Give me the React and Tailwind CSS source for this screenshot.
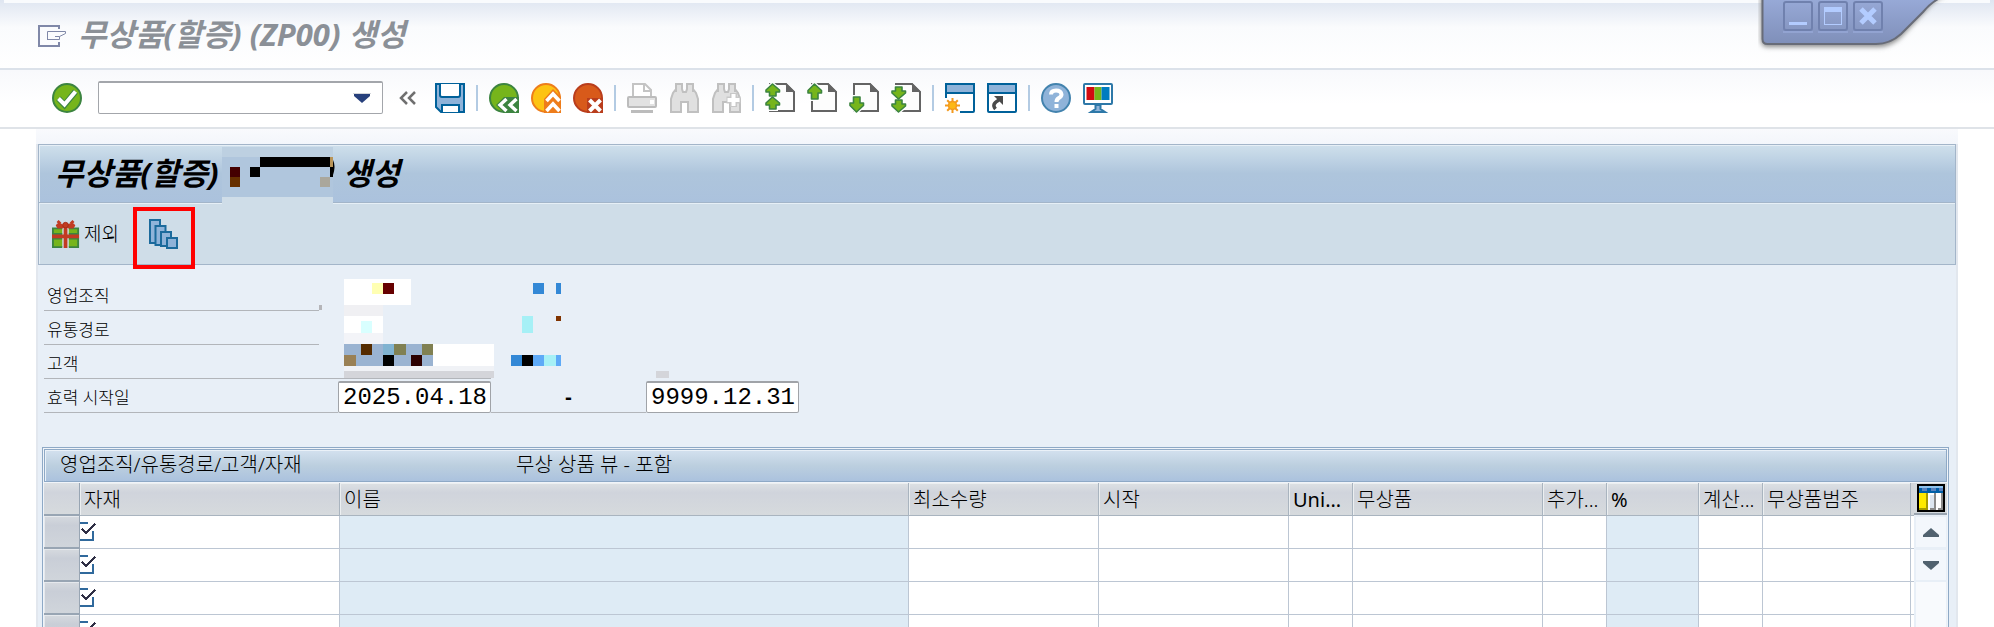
import React from 'react';

const columns = [
  { label: '자재', width: 'w-[260px]' },
  { label: '이름', width: '', readOnly: true },
  { label: '최소수량', width: 'w-[190px]' },
  { label: '시작', width: 'w-[190px]' },
  { label: 'Uni...', width: 'w-[64px]', latin: true },
  { label: '무상품', width: 'w-[190px]' },
  { label: '추가...', width: 'w-[64px]' },
  { label: '%', width: 'w-[92px]', readOnly: true, latin: true },
  { label: '계산...', width: 'w-[64px]' },
  { label: '무상품범주', width: 'w-[148px]' },
];

const rows = [1, 2, 3, 4];

function Icon({ children, size = 30 }) {
  return (
    <svg width={size} height={size} viewBox="0 0 30 30" fill="none" className="block shrink-0">
      {children}
    </svg>
  );
}

function ToolButton({ label, children, disabled }) {
  return (
    <button type="button" aria-label={label} disabled={disabled} className="block shrink-0">
      {children}
    </button>
  );
}

function Separator() {
  return <div className="-mx-px h-[26px] w-[2px] shrink-0 bg-[#b3cbe3]"></div>;
}

function CheckIcon() {
  return (
    <Icon>
      <circle cx="15" cy="15" r="14" fill="#76b51b" stroke="#3c8440" strokeWidth="2" />
      <path d="M6.5 15.5 12.5 22 23.5 8.5" stroke="#3c8440" strokeWidth="6" />
      <path d="M6.5 15.5 12.5 21.5 23.5 8.5" stroke="#fff" strokeWidth="4" />
    </Icon>
  );
}

function SaveIcon() {
  return (
    <Icon>
      <path d="M1 1H29V29H6L1 24Z" fill="#8fb3d9" stroke="#00619a" strokeWidth="2" />
      <path d="M5 1V12Q5 14 7 14H23Q25 14 25 12V1" fill="#fff" stroke="#00619a" strokeWidth="2" />
      <path d="M7 29V22H24V29" fill="#fff" stroke="#00619a" strokeWidth="2" />
    </Icon>
  );
}

function BackIcon() {
  return (
    <Icon>
      <circle cx="15" cy="15" r="14" fill="#76b51b" stroke="#3c8440" strokeWidth="2" />
      <path d="M7 22 15 14H30V30H15Z" fill="#3c8440" />
      <path d="M17.5 16 11 22 17.5 28M27.5 16 21 22 27.5 28" stroke="#fff" strokeWidth="3.4" />
    </Icon>
  );
}

function UpIcon() {
  return (
    <Icon>
      <circle cx="15" cy="15" r="14" fill="#fdc313" stroke="#ee7d1b" strokeWidth="2" />
      <path d="M13 16 22 6 30 14V30H13Z" fill="#ee7d1b" />
      <path d="M15.5 18 22 11 28.5 18M15.5 28 22 21 28.5 28" stroke="#fff" strokeWidth="3.6" />
    </Icon>
  );
}

function ExitIcon() {
  return (
    <Icon>
      <circle cx="15" cy="15" r="14" fill="#d85a1a" stroke="#b93d1c" strokeWidth="2" />
      <path d="M14 15H30V30H14Z" fill="#b93d1c" />
      <path d="M16.5 17 27.5 28M27.5 17 16.5 28" stroke="#fff" strokeWidth="4" />
    </Icon>
  );
}

function PrintIcon() {
  return (
    <Icon>
      <path d="M6 13V1H18L24 7V13" fill="#fff" stroke="#c4c4c4" strokeWidth="2" />
      <path d="M17 1V8H24" stroke="#c4c4c4" strokeWidth="2" />
      <rect x="1" y="14" width="28" height="10" rx="1" fill="#e2e2e2" stroke="#bcbcbc" strokeWidth="2" />
      <rect x="23" y="17" width="4" height="4" fill="#fff" />
      <path d="M4 28.5H26" stroke="#bcbcbc" strokeWidth="3" />
    </Icon>
  );
}

function FindIcon({ next }) {
  return (
    <Icon>
      <path
        d="M7 1H13V6L14 9H17L18 6V1H24V6L27 10 29 16V29H19V19H12V29H2V16L4 10 7 6Z"
        fill="#e0e0e0"
        stroke="#c0c0c0"
        strokeWidth="2"
      />
      <path d="M7 5V9M24 5V9" stroke="#c0c0c0" strokeWidth="2" />
      {next && (
        <g>
          <path d="M22.5 10V24M15.5 17H29.5" stroke="#c8c8c8" strokeWidth="7" />
          <path d="M22.5 11V23M16.5 17H28.5" stroke="#fff" strokeWidth="4" />
        </g>
      )}
    </Icon>
  );
}

function PageIcon({ arrows }) {
  return (
    <Icon>
      <path d="M5 1H21L29 9V28H5Z" fill="#fdfdfd" stroke="#646464" strokeWidth="2" />
      <path d="M21 0 30 9H21Z" fill="#646464" />
      {arrows.map((d) => (
        <path key={d} d={d} stroke="#fff" strokeWidth="4" />
      ))}
      {arrows.map((d) => (
        <path key={d} d={d} fill="#76b51b" stroke="#3c8440" strokeWidth="1.6" strokeLinejoin="round" />
      ))}
    </Icon>
  );
}

const pageArrows = {
  first: ['M7.5 1 14.5 7V9H11V13H4.5V9H1V7Z', 'M7.5 14 14.5 20V22H11V26H4.5V22H1V20Z'],
  previous: ['M7.5 1 14.5 7.500V10H11V16H4.5V10H1V7.500Z'],
  next: ['M7.5 29 14.5 22.500V20H11V14H4.5V20H1V22.500Z'],
  last: ['M7.5 16 14.5 10V8H11V4H4.5V8H1V10Z', 'M7.5 29 14.5 23V21H11V17H4.5V21H1V23Z'],
};

function NewWindowIcon() {
  return (
    <Icon>
      <rect x="1" y="1" width="28" height="28" rx="1" fill="#fff" stroke="#00619a" strokeWidth="2" />
      <path d="M1 1H29V10H1Z" fill="#8fb3d9" stroke="#00619a" strokeWidth="2" />
      <path d="M0 15H15V30H0Z" fill="#fff" />
      <path
        d="M7.5 15V30M0 22.5H15M2.2 17.2 12.8 27.8M12.8 17.2 2.2 27.8"
        stroke="#f39a1e"
        strokeWidth="2"
      />
      <circle cx="7.5" cy="22.5" r="4" fill="#fdb813" stroke="#f39a1e" strokeWidth="1.5" />
    </Icon>
  );
}

function ShortcutIcon() {
  return (
    <Icon>
      <rect x="1" y="1" width="28" height="28" rx="1" fill="#fff" stroke="#00619a" strokeWidth="2" />
      <path d="M1 1H29V10H1Z" fill="#8fb3d9" stroke="#00619a" strokeWidth="2" />
      <path d="M8.5 26Q4 21 12 17" stroke="#4a4a4a" strokeWidth="3.5" />
      <path d="M7 13H16V22Z" fill="#4a4a4a" />
    </Icon>
  );
}

function HelpIcon() {
  return (
    <Icon>
      <circle cx="15" cy="15" r="14" fill="#8fb3d9" stroke="#4383ae" strokeWidth="2" />
      <path
        d="M10 11.5Q10 7.5 15 7.5T20.5 11.5Q20.5 13.5 17.5 15.2 15.5 16.5 15.5 19"
        stroke="#fff"
        strokeWidth="4"
      />
      <rect x="13.5" y="21" width="4" height="4" fill="#fff" />
    </Icon>
  );
}

function MonitorIcon() {
  return (
    <Icon>
      <rect x="1" y="1" width="28" height="20" rx="1" fill="#fff" stroke="#2d78a8" strokeWidth="2" />
      <rect x="3.5" y="4" width="8" height="13" fill="#d20a11" />
      <rect x="11.5" y="4" width="7" height="13" fill="#76b51b" />
      <rect x="18.5" y="4" width="8" height="13" fill="#007cc0" />
      <path d="M12.5 22H17.5V26L22 29H8L12.5 26Z" fill="#8fb3d9" stroke="#2d78a8" strokeWidth="2" />
    </Icon>
  );
}

function GiftIcon() {
  return (
    <Icon size={28}>
      <g fill="#76b51b" stroke="#3c8440" strokeWidth="2">
        <path d="M11 9H1V15H11" />
        <path d="M18 9H28V15H18" />
        <path d="M11 20H1V29H11" />
        <path d="M18 20H28V29H18" />
      </g>
      <path d="M14.5 6V30M0 17.5H29" stroke="#c23b22" strokeWidth="4" />
      <path d="M4 6Q6 0 14 6.5 23 0 25 6L23 9H18L14.5 7 11 9H6Z" fill="#c23b22" />
      <path d="M6 1 9 4M23 1 20 4" stroke="#c23b22" strokeWidth="3" />
      <circle cx="14.5" cy="5.5" r="3" fill="#c23b22" stroke="#a32c18" />
    </Icon>
  );
}

function StepsIcon() {
  return (
    <Icon>
      <g fill="#8fb3d9" stroke="#1b6a9c" strokeWidth="2">
        <rect x="1" y="1" width="10" height="23" />
        <rect x="6.5" y="7" width="10" height="19" />
        <rect x="12" y="13" width="10" height="14" />
        <rect x="18" y="19" width="10" height="10" />
      </g>
    </Icon>
  );
}

function WindowControls() {
  return (
    <div className="absolute top-0 right-10 h-14 w-[196px]">
      <svg width="196" height="56" className="block">
        <defs>
          <linearGradient id="tab" x1="0" y1="0" x2="0" y2="1">
            <stop offset="0" stopColor="#99abd9" />
            <stop offset="1" stopColor="#7f8fb9" />
          </linearGradient>
          <filter id="tabShadow" x="-10%" y="-10%" width="120%" height="140%">
            <feGaussianBlur stdDeviation="2.5" />
          </filter>
        </defs>
        <path d="M3 -4V40Q3 47 9 47H122Q136 46 147 33L171 7Q177 -1 188 -4Z" fill="#8a8a8a" filter="url(#tabShadow)" />
        <path
          d="M4.5 -4V39Q4.5 44 9.5 44H118Q132 44 143 34L165 12Q174 1 186 -4Z"
          fill="url(#tab)"
          stroke="#686c78"
          strokeWidth="2"
        />
        <g fill="none" stroke="#7081ae" strokeWidth="2">
          <rect x="26" y="2" width="28" height="28" rx="2" />
          <rect x="61" y="2" width="28" height="28" rx="2" />
          <rect x="96" y="2" width="28" height="28" rx="2" />
        </g>
        <path d="M25 32H55M60 32H90M95 32H125" stroke="#9fb1e2" strokeWidth="1" />
        <path d="M31 23.5H49" stroke="#b3ccff" strokeWidth="3" />
        <rect x="66.5" y="7.5" width="17" height="17" fill="none" stroke="#b3ccff" />
        <path d="M66 9.5H84" stroke="#b3ccff" strokeWidth="5" />
        <path d="M103 9 117 23M117 9 103 23" stroke="#b3ccff" strokeWidth="5" />
      </svg>
      <div className="absolute top-0 left-6 flex gap-1">
        <button type="button" aria-label="최소화" className="h-8 w-8"></button>
        <button type="button" aria-label="최대화" className="h-8 w-8"></button>
        <button type="button" aria-label="닫기" className="h-8 w-8"></button>
      </div>
    </div>
  );
}

function TitleBar() {
  return (
    <header className="relative flex h-[70px] shrink-0 items-center gap-3 border-b-2 border-[#dce2ea] bg-linear-to-b from-[#dfe6f1] via-[#fafbfd] via-40% to-white pl-[38px]">
      <div className="absolute inset-x-1 top-0 h-[3px] bg-[#f9fbfd]"></div>
      <svg width="28" height="22" viewBox="0 0 28 22" fill="none" className="mt-1 shrink-0">
        <path d="M21 4V1H1V21H21V17" stroke="#8088a8" strokeWidth="2" />
        <path d="M9.5 15V6.5H27.5V8.5L21.5 11.500H17M9.5 14.5H21.5V11.500" stroke="#8088a8" />
      </svg>
      <h1 className="text-[31px] leading-9 font-bold text-[#8b9097] italic">무상품(할증) (ZP00) 생성</h1>
      <WindowControls />
    </header>
  );
}

function Toolbar() {
  return (
    <div className="flex h-[59px] shrink-0 items-center border-b-2 border-[#dfe3e8] bg-linear-to-b from-[#f8f9fc] to-white to-60% pb-[2px] pl-[52px]">
      <ToolButton label="확인"><CheckIcon /></ToolButton>
      <div className="relative ml-4 w-[285px]">
        <input
          type="text"
          aria-label="명령"
          className="block h-[33px] w-full rounded-xs border border-t-2 border-[#a3a6ab] bg-white px-2 text-lg outline-none"
        />
        <svg width="18" height="10" className="pointer-events-none absolute top-3 right-3">
          <path d="M0 0H18" stroke="#d4d6da" strokeWidth="2" />
          <path d="M1 1H17V3L9 10 1 3Z" fill="#27407c" />
        </svg>
      </div>
      <button type="button" aria-label="접기" className="ml-4">
        <svg width="17" height="14" fill="none" className="block">
          <path d="M8 1 2 7 8 13M16 1 10 7 16 13" stroke="#6f6f6f" strokeWidth="2.5" />
        </svg>
      </button>
      <div className="ml-[19px] flex items-center gap-3">
        <ToolButton label="저장"><SaveIcon /></ToolButton>
        <Separator />
        <ToolButton label="뒤로"><BackIcon /></ToolButton>
        <ToolButton label="종료"><UpIcon /></ToolButton>
        <ToolButton label="취소"><ExitIcon /></ToolButton>
        <Separator />
        <ToolButton label="인쇄" disabled><PrintIcon /></ToolButton>
        <ToolButton label="찾기" disabled><FindIcon /></ToolButton>
        <ToolButton label="다음 찾기" disabled><FindIcon next /></ToolButton>
        <Separator />
        <ToolButton label="첫 페이지"><PageIcon arrows={pageArrows.first} /></ToolButton>
        <ToolButton label="이전 페이지"><PageIcon arrows={pageArrows.previous} /></ToolButton>
        <ToolButton label="다음 페이지"><PageIcon arrows={pageArrows.next} /></ToolButton>
        <ToolButton label="마지막 페이지"><PageIcon arrows={pageArrows.last} /></ToolButton>
        <Separator />
        <ToolButton label="새 세션"><NewWindowIcon /></ToolButton>
        <ToolButton label="바로가기"><ShortcutIcon /></ToolButton>
        <Separator />
        <ToolButton label="도움말"><HelpIcon /></ToolButton>
        <ToolButton label="레이아웃"><MonitorIcon /></ToolButton>
      </div>
    </div>
  );
}

function PanelHeader() {
  return (
    <div className="border border-[#a3b5c9]">
      <div className="relative flex h-[58px] items-center border-b border-[#a3b5c9] bg-linear-to-b from-[#cfe0ec] via-[#aec5dc] via-50% to-[#abc2dd] pb-[2px] pl-4 shadow-[inset_1px_1px_0_#e6eff6]">
        <h2 className="flex items-center text-[31px] leading-9 font-bold text-black italic">
          <span className="w-[288px]">무상품(할증)</span>
          <span>생성</span>
        </h2>
        {/* masked document type */}
        <svg width="115" height="57" className="absolute top-[2px] left-[183px]">
          <g shapeRendering="crispEdges">
            <rect width="111" height="10" fill="#bdd0e1" />
            <rect y="10" width="111" height="40" fill="#b0c6dd" />
            <rect y="50" width="111" height="7" fill="#cfdde8" />
            <rect x="8" y="20" width="10" height="10" fill="#440000" />
            <rect x="8" y="30" width="10" height="10" fill="#663000" />
            <rect x="28" y="20" width="10" height="10" fill="#000" />
            <rect x="38" y="10" width="70" height="10" fill="#000" />
            <rect x="108" y="10" width="3" height="10" fill="#b89458" />
            <rect x="108" y="20" width="3" height="10" fill="#000" />
            <rect x="98" y="30" width="10" height="10" fill="#aaa79c" />
          </g>
          <path d="M111 13Q114 19 111 28Z" fill="#000" />
        </svg>
      </div>
      <div className="flex h-[61px] items-center bg-[#cfdde8] pl-[13px] shadow-[inset_1px_1px_0_#e6eff6]">
        <button type="button" className="flex items-center gap-1 text-[19px] leading-7 font-light">
          <GiftIcon />
          제외
        </button>
        <div className="relative ml-[30px]">
          <ToolButton label="단계"><StepsIcon /></ToolButton>
          <div className="pointer-events-none absolute -inset-x-4 -top-3 -bottom-5 border-4 border-[#ff0000]"></div>
        </div>
      </div>
    </div>
  );
}

function MaskedValues() {
  return (
    <svg width="360" height="102" className="absolute top-0 left-[275px]" shapeRendering="crispEdges">
      <rect x="0" y="28" width="3" height="5" fill="#b5b5b9" />
      <rect x="25" y="2" width="67" height="26" fill="#fff" />
      <rect x="53" y="6" width="11" height="11" fill="#ffffb3" />
      <rect x="64" y="6" width="11" height="11" fill="#660000" />
      <rect x="25" y="28" width="39" height="11" fill="#f0f0f3" />
      <rect x="25" y="39" width="39" height="17" fill="#fff" />
      <rect x="42" y="44" width="11" height="12" fill="#d9ffff" />
      <rect x="25" y="56" width="39" height="11" fill="#f3f4f8" />
      <rect x="25" y="67" width="89" height="22" fill="#9ab3d1" />
      <rect x="114" y="67" width="61" height="22" fill="#fff" />
      <rect x="42" y="67" width="11" height="11" fill="#552b00" />
      <rect x="64" y="67" width="11" height="11" fill="#80b3d1" />
      <rect x="75" y="67" width="12" height="11" fill="#808052" />
      <rect x="103" y="67" width="11" height="11" fill="#808052" />
      <rect x="25" y="78" width="12" height="11" fill="#998055" />
      <rect x="64" y="78" width="11" height="11" fill="#000" />
      <rect x="92" y="78" width="11" height="11" fill="#2b0000" />
      <rect x="25" y="89" width="150" height="5" fill="#f0f2f6" />
      <rect x="25" y="94" width="150" height="7" fill="#d4d5da" />
      <rect x="214" y="6" width="11" height="11" fill="#3388d6" />
      <rect x="237" y="6" width="5" height="11" fill="#3388d6" />
      <rect x="203" y="39" width="11" height="17" fill="#a6f0f6" />
      <rect x="237" y="39" width="5" height="5" fill="#803300" />
      <rect x="192" y="78" width="11" height="11" fill="#3388d6" />
      <rect x="203" y="78" width="11" height="11" fill="#000" />
      <rect x="214" y="78" width="11" height="11" fill="#5eaaf7" />
      <rect x="225" y="78" width="12" height="11" fill="#a6f0f6" />
      <rect x="237" y="78" width="5" height="11" fill="#5eaaf7" />
      <rect x="337" y="94" width="13" height="7" fill="#d4d5da" />
    </svg>
  );
}

function DateInput({ id, label, value }) {
  return (
    <input
      id={id}
      type="text"
      aria-label={label}
      defaultValue={value}
      className="h-8 w-[153px] rounded-xs border border-t-2 border-[#a0a3a8] bg-white pl-1 font-['Liberation_Mono',monospace] text-[24px] text-black outline-none"
    />
  );
}

function Selection() {
  return (
    <form className="ml-[6px] pt-3 text-[17px] leading-6 font-light text-black">
      <div className="relative">
        <div className="h-[34px] w-[275px] border-b border-[#b2b5ba] pt-[7px] pl-[3px]">영업조직</div>
        <div className="h-[34px] w-[275px] border-b border-[#b2b5ba] pt-[7px] pl-[3px]">유통경로</div>
        <div className="h-[34px] w-[447px] border-b border-[#b2b5ba] pt-[7px] pl-[3px]">고객</div>
        <div className="flex h-[34px] items-end">
          <label htmlFor="valid-from" className="h-[34px] w-[294px] border-b border-[#b2b5ba] pt-[7px] pl-[3px]">
            효력 시작일
          </label>
          <DateInput id="valid-from" label="효력 시작일" value="2025.04.18" />
          <span className="h-[34px] w-[155px] border-b border-[#b2b5ba] pt-1 text-center text-xl font-bold">-</span>
          <DateInput id="valid-to" label="효력 종료일" value="9999.12.31" />
        </div>
        <MaskedValues />
      </div>
    </form>
  );
}

function RequiredMark() {
  return (
    <svg width="17" height="20" fill="none" className="block" shapeRendering="crispEdges">
      <path d="M0 1H8M0 18H14M13 9V19" stroke="#30699c" strokeWidth="2" />
      <path d="M2 7 6 11 15 2" stroke="#2f2f45" strokeWidth="2.5" />
    </svg>
  );
}

function ScrollColumn() {
  return (
    <div className="flex w-[33px] shrink-0 flex-col items-center bg-[#e8eff7]">
      <button
        type="button"
        aria-label="테이블 설정"
        className="flex h-8 w-full items-center justify-center border-b-2 border-[#9aa5b1] bg-[#d5dade]"
      >
        <svg width="28" height="28" shapeRendering="crispEdges">
          <rect width="28" height="28" fill="#000" />
          <rect x="2" y="2" width="24" height="24" fill="#8ec3ef" />
          <rect x="2" y="4" width="24" height="5" fill="#0060a8" />
          <path d="M5 4H10V7H5ZM14 4H19V7H14ZM22 4H26V7H22Z" fill="#5a82c0" />
          <rect x="2" y="9" width="9" height="17" fill="#ffea00" />
          <path d="M9 9H11V26H2V24H9Z" fill="#a89c00" />
          <rect x="11" y="9" width="15" height="17" fill="#fff" />
          <rect x="13" y="11" width="4" height="13" fill="#dde6f0" />
          <path d="M17 9H19V26H13V24H17ZM24 9H26V26H21V24H24Z" fill="#8a8a8a" />
        </svg>
      </button>
      <button type="button" aria-label="위로" className="mt-[2px] flex h-[30px] w-[30px] items-center justify-center bg-[#f3f7fc]">
        <svg width="16" height="9">
          <path d="M8 0 16 7V9H0V7Z" fill="#51626f" />
        </svg>
      </button>
      <button type="button" aria-label="아래로" className="mt-[3px] flex h-[30px] w-[30px] items-center justify-center bg-[#f3f7fc]">
        <svg width="16" height="9">
          <path d="M8 9 16 2V0H0V2Z" fill="#51626f" />
        </svg>
      </button>
      <div className="mt-[2px] w-[30px] flex-1 bg-[#f8fafd]"></div>
    </div>
  );
}

function ItemTable() {
  return (
    <section className="mt-[34px] mr-[7px] ml-1 border border-[#8ea9c6] bg-[#f0f4f9] p-px">
      <div className="flex h-[33px] items-center border border-[#8ea9c6] bg-linear-to-b from-[#d3e1ef] via-[#bccfdf] via-50% to-[#abc2de] pb-[2px] pl-[15px] text-[20px] leading-7 font-light text-black shadow-[inset_1px_1px_0_#eaf1f8]">
        <span className="w-[456px]">영업조직/유통경로/고객/자재</span>
        <span>무상 상품 뷰 - 포함</span>
      </div>
      <div className="mt-px flex">
        <table className="min-w-0 flex-1 table-fixed border-separate border-spacing-0 text-left text-black">
          <thead>
            <tr className="h-[33px]">
              <th className="w-[36px] border-r border-b-2 border-[#98a5b3] bg-linear-to-b from-[#dde1e4] via-[#d0d4dc] via-30% to-[#d6dadd] p-0"></th>
              {columns.map((col) => (
                <th
                  key={col.label}
                  className={`${col.width} ${col.latin ? 'font-normal' : 'font-light'} overflow-hidden border-r border-b border-[#a9b4bf] bg-linear-to-b from-[#dde1e4] via-[#d0d4dc] via-30% to-[#d6dadd] p-0 pt-[2px] pl-1 text-[20px] leading-7 whitespace-nowrap shadow-[inset_1px_1px_0_#eceff1]`}
                >
                  {col.label}
                </th>
              ))}
              <th className="w-[3px] border-b border-[#a9b4bf] bg-[#d4d8dc] p-0"></th>
            </tr>
          </thead>
          <tbody>
            {rows.map((row) => (
              <tr key={row} className="h-[33px]">
                <td className="border-r border-b-2 border-[#98a5b3] bg-linear-to-b from-[#d6dadf] via-[#c9ced7] via-30% to-[#d0d5db] p-0 shadow-[inset_1px_1px_0_#e6e9ed]">
                  <button type="button" aria-label={`${row}행 선택`} className="block h-[31px] w-full"></button>
                </td>
                {columns.map((col, idx) => (
                  <td
                    key={col.label}
                    className={`border-r border-b border-[#bcc6d3] p-0 ${col.readOnly ? 'bg-[#deebf5]' : 'bg-white'}`}
                  >
                    {idx === 0 && <RequiredMark />}
                  </td>
                ))}
                <td className="border-b border-[#bcc6d3] bg-white p-0"></td>
              </tr>
            ))}
          </tbody>
        </table>
        <ScrollColumn />
      </div>
    </section>
  );
}

export default function App() {
  return (
    <div className="flex h-screen flex-col overflow-hidden bg-white font-['Noto_Sans','Noto_Sans_CJK_KR',sans-serif]">
      <TitleBar />
      <Toolbar />
      <main className="mx-9 flex-1 bg-linear-to-b from-[#f9fafd] to-[#f3f6fb] to-[15px] pt-[15px]">
        <div className="h-full border-r-2 border-l-2 border-[#e2e7ee] bg-[#e8eff7]">
          <PanelHeader />
          <Selection />
          <ItemTable />
        </div>
      </main>
    </div>
  );
}
